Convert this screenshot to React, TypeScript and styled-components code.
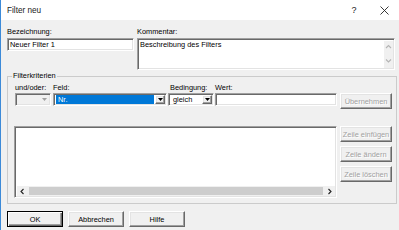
import React from 'react';
import styled, { createGlobalStyle, css } from 'styled-components';

const GlobalStyle = createGlobalStyle`
  html, body {
    margin: 0;
    padding: 0;
    background: #f0f0f0;
  }
  body {
    font-family: "Liberation Sans", Arial, sans-serif;
    font-size: 7.4px;
    color: #000;
  }
  * {
    box-sizing: border-box;
  }
`;

const sunken = css`
  border: 1px solid;
  border-color: #a0a0a0 #ffffff #ffffff #a0a0a0;
  box-shadow: inset 1px 1px 0 #696969, inset -1px -1px 0 #e3e3e3;
`;

const raised = css`
  border: 1px solid;
  border-color: #ffffff #696969 #696969 #ffffff;
  box-shadow: inset -1px -1px 0 #a0a0a0, inset 1px 1px 0 #e3e3e3;
`;

const Window = styled.div`
  width: 399px;
  height: 230px;
  background: #f0f0f0;
  border-left: 1px solid #3c8ad8;
  display: flex;
  flex-direction: column;
  overflow: hidden;
`;

const TitleBar = styled.div`
  height: 20px;
  flex: none;
  background: #ffffff;
  display: flex;
  align-items: center;
  padding-left: 6px;
`;

const Title = styled.span`
  font-size: 8.2px;
  color: #1a1a1a;
  flex: 1;
`;

const TitleButton = styled.span`
  width: 30px;
  height: 20px;
  display: flex;
  align-items: center;
  justify-content: center;
  font-size: 9px;
  color: #222;
`;

const Body = styled.div`
  padding: 0 2px 0 6px;
  display: flex;
  flex-direction: column;
`;

const TopRow = styled.div`
  margin-top: 6px;
  display: grid;
  grid-template-columns: 127px 258px;
  column-gap: 3px;
`;

const Label = styled.div<{ $indent?: number }>`
  height: 12px;
  line-height: 11px;
  padding-left: ${p => p.$indent ?? 0}px;
  white-space: nowrap;
`;

const TextInput = styled.div<{ $w?: number }>`
  ${sunken};
  height: 13px;
  width: ${p => (p.$w ? `${p.$w}px` : 'auto')};
  background: #ffffff;
  padding: 0 2px;
  line-height: 11px;
  white-space: nowrap;
  overflow: hidden;
`;

const TextArea = styled.div`
  ${sunken};
  height: 32px;
  background: #ffffff;
  display: flex;
`;

const AreaText = styled.div`
  flex: 1;
  padding: 1px 2px;
  line-height: 10px;
`;

const VScroll = styled.div`
  width: 9px;
  margin: 2px 1px 1px 0;
  background: #f0f0f0;
  display: flex;
  flex-direction: column;
  justify-content: space-between;
  align-items: center;
  padding: 3px 0;
`;

const Group = styled.fieldset`
  margin: 1px 0 0;
  padding: 1px 4px 5px 6px;
  border: 1px solid #cbcbcb;
  min-width: 0;
`;

const Legend = styled.legend`
  margin-left: -2px;
  padding: 0 1px;
  font-size: 7.4px;
  line-height: 10px;
`;

const CriteriaRow = styled.div`
  display: flex;
  align-items: flex-start;
`;

const Field = styled.div<{ $w: number; $ml: number }>`
  width: ${p => p.$w}px;
  margin-left: ${p => p.$ml}px;
  display: flex;
  flex-direction: column;
`;

const FieldLabel = styled.div<{ $indent?: number }>`
  height: 11px;
  line-height: 11px;
  padding-left: ${p => p.$indent ?? 0}px;
  white-space: nowrap;
`;

const Combo = styled.div<{ $disabled?: boolean }>`
  ${sunken};
  height: 13px;
  background: ${p => (p.$disabled ? '#f0f0f0' : '#ffffff')};
  display: flex;
  align-items: stretch;
  padding: 1px 1px 1px 2px;
`;

const ComboValue = styled.div<{ $selected?: boolean }>`
  flex: 1;
  line-height: 9px;
  padding-left: 2px;
  margin-right: 1px;
  white-space: nowrap;
  background: ${p => (p.$selected ? '#0078d7' : 'transparent')};
  color: ${p => (p.$selected ? '#ffffff' : '#000000')};
`;

const ComboArrow = styled.div<{ $disabled?: boolean }>`
  ${raised};
  width: 10px;
  flex: none;
  display: flex;
  align-items: center;
  justify-content: center;
  background: #f0f0f0;
  ${p =>
    p.$disabled &&
    css`
      border-color: #f0f0f0;
      box-shadow: none;
    `}
`;

const Button = styled.div<{ $w?: number; $disabled?: boolean; $default?: boolean }>`
  ${raised};
  width: ${p => p.$w ?? 52}px;
  height: 16px;
  flex: none;
  background: #f0f0f0;
  display: flex;
  align-items: center;
  justify-content: center;
  white-space: nowrap;
  color: ${p => (p.$disabled ? '#a0a0a0' : '#000000')};
  text-shadow: ${p => (p.$disabled ? '1px 1px 0 #ffffff' : 'none')};
  ${p =>
    p.$default &&
    css`
      border-color: #000000;
      box-shadow: inset 1px 1px 0 #ffffff, inset -1px -1px 0 #696969, inset -2px -2px 0 #a0a0a0;
    `}
`;

const SideButton = styled(Button)`
  margin-top: 11px;
  margin-left: 3px;
`;

const ListRow = styled.div`
  margin-top: 17px;
  display: flex;
  align-items: flex-start;
  gap: 3px;
`;

const ListBox = styled.div`
  ${sunken};
  width: 323px;
  height: 72px;
  background: #ffffff;
  display: flex;
  flex-direction: column;
  justify-content: flex-end;
  padding: 2px 1px 1px 2px;
`;

const HScroll = styled.div`
  height: 10px;
  background: #f0f0f0;
  display: flex;
  align-items: stretch;
`;

const ScrollArrow = styled.div`
  width: 11px;
  display: flex;
  align-items: center;
  justify-content: center;
`;

const ScrollThumb = styled.div`
  flex: 1;
  margin: 1px 1px;
  background: #cdcdcd;
`;

const ButtonColumn = styled.div`
  display: flex;
  flex-direction: column;
  gap: 4px;
`;

const Footer = styled.div`
  margin-top: 7px;
  display: flex;
  gap: 5px;
`;

const DownTriangle = ({ color = '#000' }: { color?: string }) => (
  <svg width="5" height="3" viewBox="0 0 5 3">
    <polygon points="0,0 5,0 2.5,3" fill={color} />
  </svg>
);

const Chevron = ({ dir, color }: { dir: 'up' | 'down' | 'left' | 'right'; color: string }) => {
  const pts = {
    up: '1,4 3.5,1.5 6,4',
    down: '1,1.5 3.5,4 6,1.5',
    left: '4.5,1 2,3.5 4.5,6',
    right: '2.5,1 5,3.5 2.5,6',
  }[dir];
  return (
    <svg width="7" height="7" viewBox="0 0 7 7">
      <polyline points={pts} fill="none" stroke={color} strokeWidth="1.1" />
    </svg>
  );
};

const CloseIcon = () => (
  <svg width="9" height="9" viewBox="0 0 9 9">
    <path d="M0.5 0.5 L8.5 8.5 M8.5 0.5 L0.5 8.5" stroke="#222" strokeWidth="0.9" />
  </svg>
);

export default function App() {
  return (
    <>
      <GlobalStyle />
      <Window>
        <TitleBar>
          <Title>Filter neu</Title>
          <TitleButton>?</TitleButton>
          <TitleButton>
            <CloseIcon />
          </TitleButton>
        </TitleBar>

        <Body>
          <TopRow>
            <div>
              <Label>Bezeichnung:</Label>
              <TextInput>Neuer Filter 1</TextInput>
            </div>
            <div>
              <Label>Kommentar:</Label>
              <TextArea>
                <AreaText>Beschreibung des Filters</AreaText>
                <VScroll>
                  <Chevron dir="up" color="#b4b4b4" />
                  <Chevron dir="down" color="#b4b4b4" />
                </VScroll>
              </TextArea>
            </div>
          </TopRow>

          <Group>
            <Legend>Filterkriterien</Legend>
            <CriteriaRow>
              <Field $w={36} $ml={1}>
                <FieldLabel>und/oder:</FieldLabel>
                <Combo $disabled>
                  <ComboValue />
                  <ComboArrow $disabled>
                    <DownTriangle color="#a0a0a0" />
                  </ComboArrow>
                </Combo>
              </Field>
              <Field $w={114} $ml={2}>
                <FieldLabel>Feld:</FieldLabel>
                <Combo>
                  <ComboValue $selected>Nr.</ComboValue>
                  <ComboArrow>
                    <DownTriangle />
                  </ComboArrow>
                </Combo>
              </Field>
              <Field $w={46} $ml={1}>
                <FieldLabel $indent={2}>Bedingung:</FieldLabel>
                <Combo>
                  <ComboValue>gleich</ComboValue>
                  <ComboArrow>
                    <DownTriangle />
                  </ComboArrow>
                </Combo>
              </Field>
              <Field $w={122} $ml={1}>
                <FieldLabel>Wert:</FieldLabel>
                <TextInput />
              </Field>
              <SideButton $disabled>Übernehmen</SideButton>
            </CriteriaRow>

            <ListRow>
              <ListBox>
                <HScroll>
                  <ScrollArrow>
                    <Chevron dir="left" color="#222" />
                  </ScrollArrow>
                  <ScrollThumb />
                  <ScrollArrow>
                    <Chevron dir="right" color="#222" />
                  </ScrollArrow>
                </HScroll>
              </ListBox>
              <ButtonColumn>
                <Button $disabled>Zeile einfügen</Button>
                <Button $disabled>Zeile ändern</Button>
                <Button $disabled>Zeile löschen</Button>
              </ButtonColumn>
            </ListRow>
          </Group>

          <Footer>
            <Button $w={56} $default>OK</Button>
            <Button $w={56}>Abbrechen</Button>
            <Button $w={56}>Hilfe</Button>
          </Footer>
        </Body>
      </Window>
    </>
  );
}
